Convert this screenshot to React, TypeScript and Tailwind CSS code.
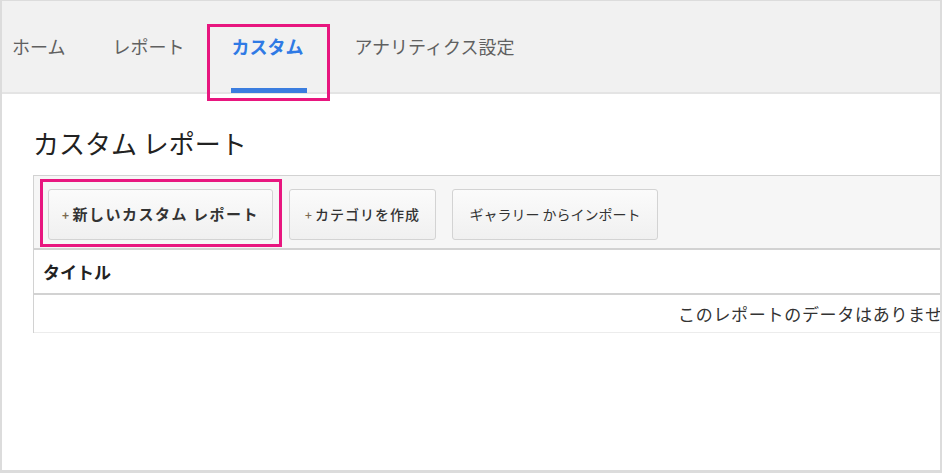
const tabs = ["ホーム", "レポート", "カスタム", "アナリティクス設定"];

function Pink({ className }: { className: string }) {
  return <span className={"pointer-events-none absolute border-[3px] border-[#e8167f] " + className} />;
}

export default function App() {
  return (
    <div
      className="relative h-[473px] w-[942px] overflow-hidden border-t border-r-2 border-b-[3px] border-l-2 border-[#dcdcdc] bg-white text-[#333]"
      style={{ fontFamily: '"Noto Sans CJK JP", "Noto Sans", sans-serif' }}
    >
      {/* top nav */}
      <nav className="flex h-[93px] items-stretch gap-[47px] border-b-2 border-[#e4e4e4] bg-[#f1f1f1] pl-[10px]">
        {tabs.map((t) =>
          t === "カスタム" ? (
            <div key={t} className="relative flex w-[76px] items-center">
              <span className="text-[18px] font-bold text-[#2f7ae5]">{t}</span>
              <span className="absolute right-0 -bottom-[1px] left-0 h-[5px] bg-[#3b7ddf]" />
              <Pink className="top-[23px] -right-[23px] -bottom-[9px] -left-[24px]" />
            </div>
          ) : (
            <div key={t} className="flex items-center text-[18px] text-[#606060]">
              {t}
            </div>
          )
        )}
      </nav>

      <main className="pl-[31px]">
        <h1 className="mt-[33px] text-[26px] leading-[32px] text-[#222]">カスタム レポート</h1>

        {/* toolbar */}
        <div className="mt-[16px] flex w-[960px] items-center gap-[16px] border border-b-2 border-[#d2d2d2] bg-[#f6f6f6] pt-[13px] pb-[8px] pl-[14px]">
          <div className="relative">
            <button className="flex h-[51px] w-[225px] items-center justify-center rounded-[3px] border border-[#d3d3d3] bg-gradient-to-b from-[#fbfbfb] to-[#f0f0f0] text-[15px] font-bold tracking-[1.5px] text-[#333]">
              <span className="mr-[2px] text-[12px] text-[#7a6a50]">+</span>新しいカスタム レポート
            </button>
            <Pink className="-top-[10px] -right-[9px] -bottom-[7px] -left-[8px]" />
          </div>
          <button className="flex h-[51px] w-[147px] items-center justify-center rounded-[3px] border border-[#d3d3d3] bg-gradient-to-b from-[#fbfbfb] to-[#f0f0f0] text-[14px] font-medium tracking-[1px] text-[#333]">
            <span className="mr-[2px] text-[12px] text-[#7a6a50]">+</span>カテゴリを作成
          </button>
          <button className="flex h-[51px] w-[206px] items-center justify-center rounded-[3px] border border-[#d3d3d3] bg-gradient-to-b from-[#fbfbfb] to-[#f0f0f0] text-[14px] text-[#333]">
            ギャラリー からインポート
          </button>
        </div>

        {/* table */}
        <div className="w-[960px] border-l border-[#d2d2d2]">
          <div className="flex h-[45px] items-center border-b-2 border-[#d2d2d2] pl-[9px] text-[17px] font-bold text-[#222]">
            タイトル
          </div>
          <div className="flex h-[38px] items-center border-b border-[#ececec] pl-[644px] text-[17px] tracking-[0.7px] whitespace-nowrap text-[#333]">
            このレポートのデータはありません。
          </div>
        </div>
      </main>
    </div>
  );
}
